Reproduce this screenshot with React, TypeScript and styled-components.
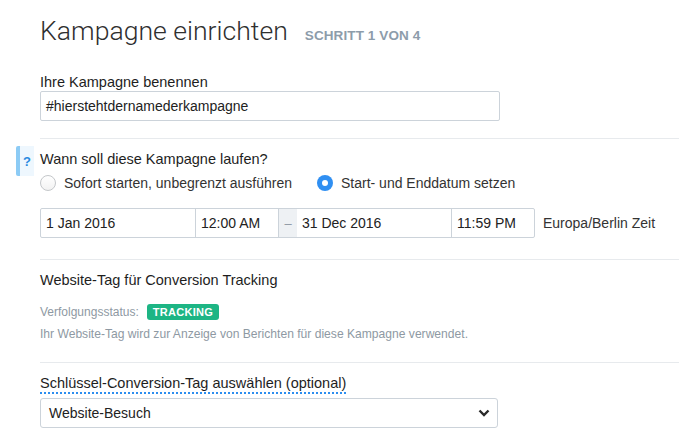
import React from "react";
import styled, { createGlobalStyle } from "styled-components";

const GlobalStyle = createGlobalStyle`
  html, body {
    margin: 0;
    padding: 0;
    background: #ffffff;
  }
  body {
    font-family: "Liberation Sans", Arial, sans-serif;
    color: #333333;
    -webkit-font-smoothing: antialiased;
  }
`;

const Page = styled.div`
  width: 679px;
  height: 447px;
  overflow: hidden;
  padding: 15px 0 0 40px;
  box-sizing: border-box;
`;

const Header = styled.div`
  display: flex;
  align-items: baseline;
  gap: 17px;
`;

const Title = styled.h1`
  margin: 0;
  font-family: Roboto, "Liberation Sans", sans-serif;
  font-size: 26.6px;
  line-height: 32px;
  font-weight: 300;
  color: #2f2f2f;
`;

const Step = styled.span`
  font-size: 13.5px;
  font-weight: 700;
  color: #8d9caa;
  letter-spacing: 0.1px;
`;

const Section = styled.section<{ $top: number; $bottom: number; $divider?: boolean }>`
  position: relative;
  padding: ${(p) => p.$top}px 0 ${(p) => p.$bottom}px 0;
  border-top: ${(p) => (p.$divider ? "1px solid #e7eaed" : "none")};
`;

const Label = styled.div`
  font-size: 14.5px;
  line-height: 18px;
  color: #1e1e1e;
`;

const TextInput = styled.div<{ $width: number }>`
  width: ${(p) => p.$width}px;
  height: 30px;
  box-sizing: border-box;
  border: 1px solid #ccd3da;
  border-radius: 2px;
  padding: 0 5px;
  display: flex;
  align-items: center;
  font-size: 14px;
  color: #222222;
`;

const HelpMarker = styled.div`
  position: absolute;
  left: -24px;
  top: 7px;
  width: 18px;
  height: 30px;
  box-sizing: border-box;
  border-left: 4px solid #8ccbf5;
  background: #eef7fe;
  border-radius: 2px 0 0 2px;
  display: flex;
  align-items: center;
  justify-content: center;
  font-size: 13px;
  font-weight: 700;
  color: #2a8ae0;
`;

const RadioRow = styled.div`
  display: flex;
  align-items: center;
  margin-top: 6px;
  height: 18px;
`;

const RadioOption = styled.label<{ $width?: number }>`
  display: flex;
  align-items: center;
  gap: 8px;
  width: ${(p) => (p.$width ? `${p.$width}px` : "auto")};
  font-size: 14px;
  color: #333333;
`;

const RadioDot = styled.span<{ $checked?: boolean }>`
  width: 16px;
  height: 16px;
  box-sizing: border-box;
  border-radius: 50%;
  flex-shrink: 0;
  display: flex;
  align-items: center;
  justify-content: center;
  border: ${(p) => (p.$checked ? "none" : "1px solid #c4c7ca")};
  background: ${(p) =>
    p.$checked ? "#2f8ff2" : "linear-gradient(#ffffff, #f2f2f2)"};

  &::after {
    content: "";
    display: ${(p) => (p.$checked ? "block" : "none")};
    width: 6px;
    height: 6px;
    border-radius: 50%;
    background: #ffffff;
  }
`;

const DateRow = styled.div`
  display: flex;
  align-items: center;
  margin-top: 16px;
`;

const DateGroup = styled.div`
  display: flex;
  height: 30px;
  box-sizing: border-box;
  border: 1px solid #ccd3da;
  border-radius: 2px;
`;

const DateCell = styled.div<{ $width: number }>`
  width: ${(p) => p.$width}px;
  box-sizing: border-box;
  padding: 0 5px;
  display: flex;
  align-items: center;
  font-size: 14px;
  color: #222222;

  & + & {
    border-left: 1px solid #ccd3da;
  }
`;

const Dash = styled.div`
  width: 19px;
  box-sizing: border-box;
  border-left: 1px solid #ccd3da;
  background: #eef1f4;
  display: flex;
  align-items: center;
  justify-content: center;
  font-size: 13px;
  color: #8d98a3;
`;

const Zone = styled.span`
  margin-left: 8px;
  font-size: 14px;
  color: #333333;
`;

const StatusRow = styled.div`
  display: flex;
  align-items: center;
  gap: 8px;
  margin-top: 15px;
  height: 16px;
`;

const Muted = styled.span`
  font-size: 12px;
  line-height: 16px;
  color: #8e99a3;
`;

const Badge = styled.span`
  height: 16px;
  padding: 0 6px;
  border-radius: 3px;
  background: #1db584;
  color: #ffffff;
  font-size: 11px;
  font-weight: 700;
  letter-spacing: 0.3px;
  display: flex;
  align-items: center;
`;

const Note = styled.div`
  margin-top: 6px;
  font-size: 12.1px;
  line-height: 16px;
  color: #8e99a3;
`;

const HintLabel = styled.span`
  display: inline-block;
  font-size: 14.5px;
  line-height: 18px;
  color: #1e1e1e;
  border-bottom: 2px dotted #2c8ef0;
`;

const Select = styled.div`
  margin-top: 4px;
  width: 458px;
  height: 30px;
  box-sizing: border-box;
  border: 1px solid #ccd3da;
  border-radius: 3px;
  padding: 0 7px 0 8px;
  display: flex;
  align-items: center;
  justify-content: space-between;
  font-size: 14px;
  color: #222222;
`;

const Chevron = () => (
  <svg width="12" height="8" viewBox="0 0 12 8">
    <path d="M1.5 1.5 L6 6 L10.5 1.5" fill="none" stroke="#2a2a2a" strokeWidth="2.4" />
  </svg>
);

export default function App() {
  return (
    <>
      <GlobalStyle />
      <Page>
        <Header>
          <Title>Kampagne einrichten</Title>
          <Step>SCHRITT 1 VON 4</Step>
        </Header>

        <Section $top={26} $bottom={17}>
          <Label>Ihre Kampagne benennen</Label>
          <TextInput $width={460}>#hierstehtdernamederkampagne</TextInput>
        </Section>

        <Section $top={11} $bottom={21} $divider>
          <HelpMarker>?</HelpMarker>
          <Label>Wann soll diese Kampagne laufen?</Label>
          <RadioRow>
            <RadioOption $width={277}>
              <RadioDot />
              Sofort starten, unbegrenzt ausführen
            </RadioOption>
            <RadioOption>
              <RadioDot $checked />
              Start- und Enddatum setzen
            </RadioOption>
          </RadioRow>
          <DateRow>
            <DateGroup>
              <DateCell $width={154}>1 Jan 2016</DateCell>
              <DateCell $width={83}>12:00 AM</DateCell>
              <Dash>–</Dash>
              <DateCell $width={154}>31 Dec 2016</DateCell>
              <DateCell $width={83}>11:59 PM</DateCell>
            </DateGroup>
            <Zone>Europa/Berlin Zeit</Zone>
          </DateRow>
        </Section>

        <Section $top={11} $bottom={20} $divider>
          <Label>Website-Tag für Conversion Tracking</Label>
          <StatusRow>
            <Muted>Verfolgungsstatus:</Muted>
            <Badge>TRACKING</Badge>
          </StatusRow>
          <Note>
            Ihr Website-Tag wird zur Anzeige von Berichten für diese Kampagne verwendet.
          </Note>
        </Section>

        <Section $top={11} $bottom={20} $divider>
          <HintLabel>Schlüssel-Conversion-Tag auswählen (optional)</HintLabel>
          <Select>
            Website-Besuch
            <Chevron />
          </Select>
        </Section>
      </Page>
    </>
  );
}
